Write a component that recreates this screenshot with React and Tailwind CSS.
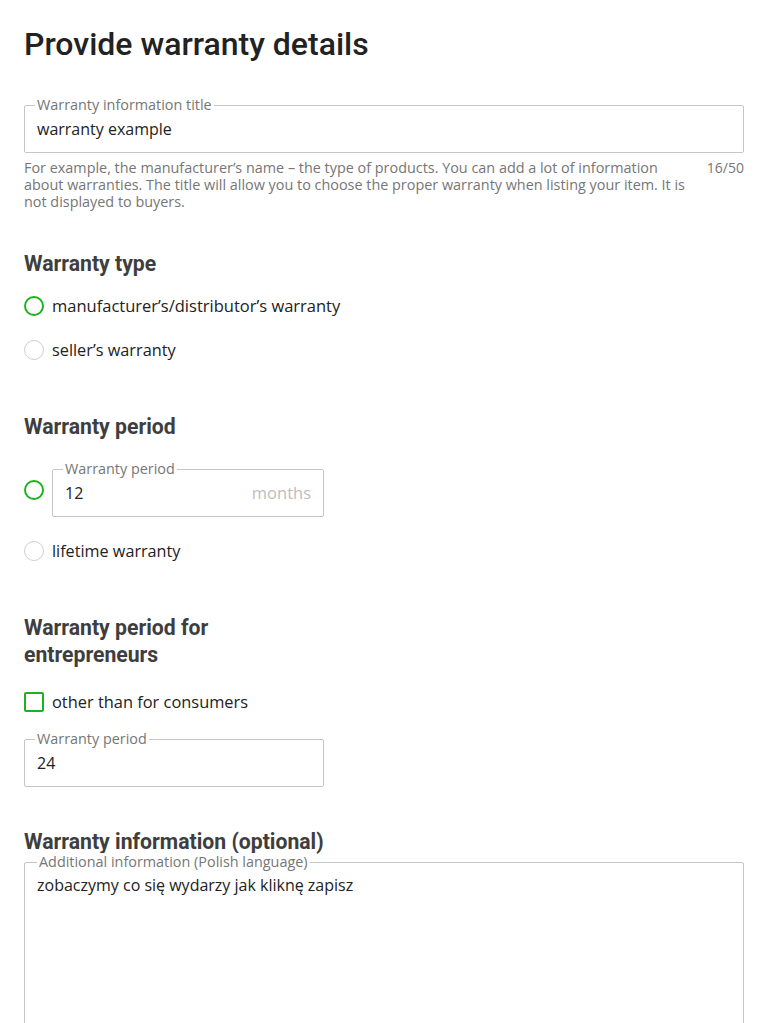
import React from "react";

const sans = { fontFamily: '"Open Sans", "Liberation Sans", sans-serif' };

function Field({ label, value, suffix, className = "" }) {
  return (
    <div className={`relative h-12 border border-[#c6c6c6] rounded-[2px] flex items-center px-3 ${className}`}>
      <span className="absolute -top-[10px] left-[10px] px-[2px] bg-white text-[14.4px] leading-[18px] text-[#767676] whitespace-nowrap">
        {label}
      </span>
      <span className="text-[16px] text-[#222] flex-1">{value}</span>
      {suffix && <span className="text-[16.5px] text-[#bdbdbd]">{suffix}</span>}
    </div>
  );
}

function Radio({ checked }) {
  return (
    <span
      className={`w-5 h-5 rounded-full shrink-0 ${
        checked ? "border-2 border-[#1cb31c]" : "border border-[#cfcfcf]"
      }`}
    />
  );
}

function Heading({ children, className = "" }) {
  return (
    <h2
      className={`text-[21.2px] leading-[27px] font-bold text-[#3e3e3e] ${className}`}
      style={{ fontFamily: 'Roboto, "Liberation Sans", sans-serif' }}
    >
      {children}
    </h2>
  );
}

export default function App() {
  return (
    <div className="bg-white px-6 pt-[26px] overflow-hidden h-[1023px]" style={sans}>
      <h1
        className="text-[32px] leading-[36px] font-medium text-[#222]"
        style={{ fontFamily: 'Roboto, "Liberation Sans", sans-serif' }}
      >
        Provide warranty details
      </h1>

      <Field className="mt-[43px]" label="Warranty information title" value="warranty example" />
      <div className="mt-[6px] flex justify-between text-[#767676]">
        <p className="w-[672px] text-[14.4px] leading-[17px]">
          For example, the manufacturer’s name – the type of products. You can add a lot of information about
          warranties. The title will allow you to choose the proper warranty when listing your item. It is not
          displayed to buyers.
        </p>
        <span className="shrink-0 text-[14px] leading-[17px]">16/50</span>
      </div>

      <Heading className="mt-[40px]">Warranty type</Heading>
      <div className="mt-[17px] flex flex-col gap-5">
        <label className="flex items-center gap-2 h-6 text-[16.5px] text-[#222]">
          <Radio checked />
          manufacturer’s/distributor’s warranty
        </label>
        <label className="flex items-center gap-2 h-6 text-[16.3px] text-[#222]">
          <Radio />
          seller’s warranty
        </label>
      </div>

      <Heading className="mt-[51px]">Warranty period</Heading>
      <div className="mt-[29px] flex items-start gap-2">
        <div className="h-6 mt-[9px] flex items-center">
          <Radio checked />
        </div>
        <Field className="w-[272px]" label="Warranty period" value="12" suffix="months" />
      </div>
      <label className="mt-[22px] flex items-center gap-2 h-6 text-[16.2px] text-[#222]">
        <Radio />
        lifetime warranty
      </label>

      <Heading className="mt-[51px] w-[272px]">Warranty period for entrepreneurs</Heading>
      <label className="mt-[22px] flex items-center gap-2 h-6 text-[16.4px] text-[#222]">
        <span className="w-5 h-5 rounded-[2px] border-2 border-[#1cb31c] shrink-0" />
        other than for consumers
      </label>
      <Field className="mt-[25px] w-[300px]" label="Warranty period" value="24" />

      <Heading className="mt-[41px]">Warranty information (optional)</Heading>
      <div className="relative mt-[7px] h-[220px] border border-[#c6c6c6] rounded-[2px] px-3 pt-[12px]">
        <span className="absolute -top-[10px] left-[12px] px-[2px] bg-white text-[14.4px] leading-[18px] text-[#767676] whitespace-nowrap">
          Additional information (Polish language)
        </span>
        <p className="text-[16px] leading-[20px] text-[#222]">zobaczymy co się wydarzy jak kliknę zapisz</p>
      </div>
    </div>
  );
}
